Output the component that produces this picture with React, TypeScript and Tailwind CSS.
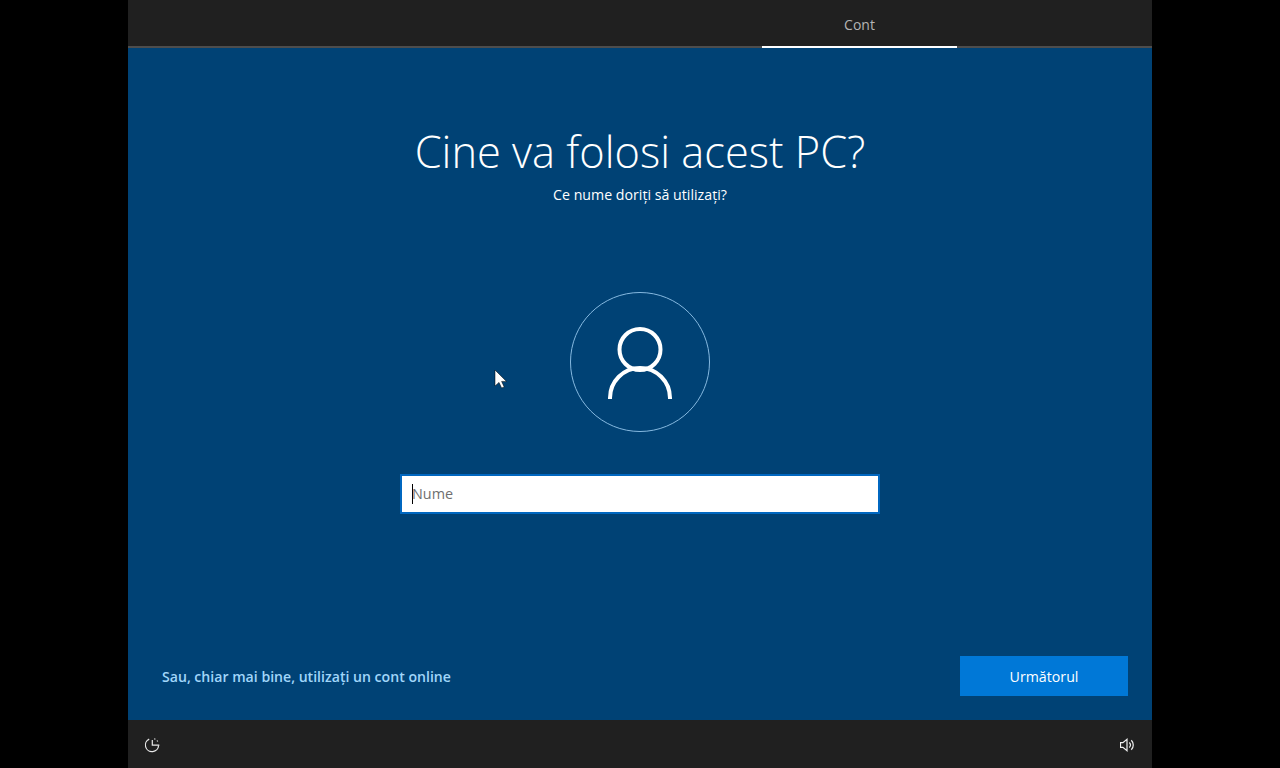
/*
 * Windows 10 OOBE — "Cine va folosi acest PC?" account name screen
 */

const font = "font-['Open_Sans','Noto_Sans',sans-serif]";

function UserIcon() {
  return (
    <svg className="mt-[2px]" width="66" height="72" viewBox="0 0 66 72" fill="none" stroke="#fff" strokeWidth="4">
      <circle cx="33" cy="22.500" r="20.500" />
      <path d="M3 72v-1a30 30 0 0 1 60 0v1" />
    </svg>
  );
}

function RestartIcon() {
  return (
    <svg width="16" height="16" viewBox="0 0 16 16" fill="none" stroke="#e8e8e8" strokeWidth="1.2">
      <path d="M5.200 2.100A6.600 6.600 0 1 0 14.600 8.400" />
      <path d="M8.300 3v5.200h7" />
      <path d="M10.200 1.800l1.200.5M13 3.500l.7 1" />
    </svg>
  );
}

function VolumeIcon() {
  return (
    <svg width="14" height="16" viewBox="1 0 14 16" fill="none" stroke="#f0f0f0" strokeWidth="1.2">
      <path d="M1.500 5.600h2.400L8 2.200v11.600L3.900 10.400H1.500z" />
      <path d="M10.300 5.500a3.600 3.600 0 0 1 0 5" />
      <path d="M12.300 3.300a6.600 6.600 0 0 1 0 9.400" />
    </svg>
  );
}

function Cursor() {
  return (
    <svg className="absolute left-[494px] top-[369px]" width="14" height="20" viewBox="0 0 14 20">
      <path d="M1 1v16l4-3.600 2.600 5.600 2.600-1.100-2.600-5.500h4.900z" fill="#fff" stroke="#000" strokeWidth=".5" />
    </svg>
  );
}

export default function App() {
  return (
    <div className={`${font} relative flex h-[768px] w-[1280px] justify-center overflow-hidden bg-black`}>
      <div className="flex w-[1024px] flex-col bg-[#004275]">
        {/* Top bar */}
        <div className="flex h-[48px] shrink-0 border-b-2 border-[#4d4d4d] bg-[#202020] pl-[634px]">
          <div className="-mb-[2px] flex h-[48px] w-[195px] items-center justify-center border-b-2 border-white pt-[2px] text-[14px] text-[#b4b4b4]">
            Cont
          </div>
        </div>

        {/* Content */}
        <div className="flex flex-1 flex-col items-center pt-[72px]">
          <h1 className="h-[64px] text-[43.400px] leading-[64px] font-light text-white">Cine va folosi acest PC?</h1>
          <p className="-mt-[1px] h-[24px] text-[14.200px] leading-[24px] text-white">Ce nume doriți să utilizați?</p>

          <div className="mt-[85px] flex h-[140px] w-[140px] items-center justify-center rounded-full border border-[#86b9e0]">
            <UserIcon />
          </div>

          <div className="mt-[42px] flex h-[40px] w-[480px] items-center border-2 border-[#0067c0] bg-white pl-[10px] text-[14.400px] text-[#6f6f6f]">
            <span className="h-[20px] w-px bg-black" />
            <span className="-ml-px">Nume</span>
          </div>

          <div className="mt-auto flex w-full items-center justify-between pr-[24px] pb-[24px] pl-[34px]">
            <span className="mt-[2px] text-[14.100px] font-semibold text-[#a0d6fa]">Sau, chiar mai bine, utilizați un cont online</span>
            <button className="h-[40px] w-[168px] bg-[#0078d7] pt-[1px] text-[14.200px] text-white">Următorul</button>
          </div>
        </div>

        {/* Bottom bar */}
        <div className="flex h-[48px] shrink-0 items-center justify-between bg-[#202020] pt-[2px] pr-[18px] pl-[16px]">
          <RestartIcon />
          <VolumeIcon />
        </div>
      </div>
      <Cursor />
    </div>
  );
}
